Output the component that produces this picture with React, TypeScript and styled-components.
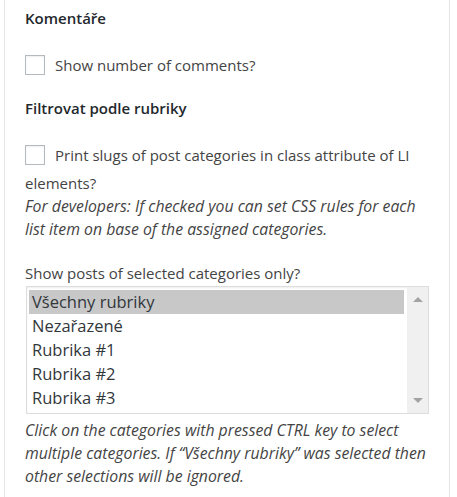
import styled, { createGlobalStyle } from 'styled-components'

const GlobalStyle = createGlobalStyle`
  html, body {
    margin: 0;
    padding: 0;
    background: #ffffff;
  }
  body {
    font-family: "Open Sans", "Liberation Sans", sans-serif;
    color: #444444;
  }
`;

const Panel = styled.div`
  margin-left: 4px;
  width: 446px;
  min-height: 497px;
  border-left: 1px solid #e5e5e5;
  border-right: 1px solid #e5e5e5;
  padding: 6px 20px 0 20px;
  box-sizing: border-box;
`;

const Heading = styled.h4`
  margin: 0;
  font-size: 15px;
  font-weight: 600;
  color: #23282d;
  line-height: 24px;
`;

const Section = styled.div<{ $top: number }>`
  margin-top: ${(p) => p.$top}px;
`;

const CheckRow = styled.label`
  display: block;
  font-size: 15px;
  line-height: 28px;
  color: #444444;
`;

const Box = styled.span`
  display: inline-block;
  width: 18px;
  height: 18px;
  border: 1px solid #b4b9be;
  box-shadow: inset 0 1px 2px rgba(0, 0, 0, 0.07);
  background: #ffffff;
  vertical-align: -4px;
  margin-right: 10px;
`;

const Note = styled.p<{ $top?: number }>`
  margin: ${(p) => p.$top ?? 0}px 0 0 0;
  font-size: 15.8px;
  font-style: italic;
  line-height: 23px;
  color: #444444;
`;

const Label = styled.div`
  font-size: 15px;
  line-height: 23px;
  color: #444444;
`;

const ListBox = styled.div`
  display: flex;
  margin: 1px 0 0 1px;
  height: 128px;
  border: 1px solid #dddddd;
  box-sizing: border-box;
  box-shadow: inset 0 1px 2px rgba(0, 0, 0, 0.07);
`;

const Options = styled.div`
  flex: 1;
  padding: 3px 3px 0 2px;
`;

const Option = styled.div<{ $selected?: boolean }>`
  height: 24px;
  line-height: 24px;
  padding-left: 3px;
  font-size: 16.5px;
  color: #32373c;
  background: ${(p) => (p.$selected ? '#c8c8c8' : 'transparent')};
`;

const Scrollbar = styled.div`
  width: 21px;
  background: #f0f0f0;
  display: flex;
  flex-direction: column;
  justify-content: space-between;
  align-items: center;
  padding: 10px 0 10px 0;
`;

const Arrow = styled.span<{ $down?: boolean }>`
  width: 0;
  height: 0;
  border-left: 5px solid transparent;
  border-right: 5px solid transparent;
  ${(p) =>
    p.$down
      ? 'border-top: 5px solid #a3a3a3;'
      : 'border-bottom: 5px solid #a3a3a3;'}
`;

const categories = ['Všechny rubriky', 'Nezařazené', 'Rubrika #1', 'Rubrika #2', 'Rubrika #3'];

function App() {
  return (
    <>
      <GlobalStyle />
      <Panel>
        <Heading>Komentáře</Heading>
        <Section $top={21}>
          <CheckRow>
            <Box />
            Show number of comments?
          </CheckRow>
        </Section>
        <Section $top={17}>
          <Heading>Filtrovat podle rubriky</Heading>
        </Section>
        <Section $top={21}>
          <CheckRow>
            <Box />
            Print slugs of post categories in class attribute of LI elements?
          </CheckRow>
          <Note $top={-2}>
            For developers: If checked you can set CSS rules for each list item on base of the assigned categories.
          </Note>
        </Section>
        <Section $top={21}>
          <Label>Show posts of selected categories only?</Label>
          <ListBox>
            <Options>
              {categories.map((c, i) => (
                <Option key={c} $selected={i === 0}>{c}</Option>
              ))}
            </Options>
            <Scrollbar>
              <Arrow />
              <Arrow $down />
            </Scrollbar>
          </ListBox>
          <Note $top={5}>
            Click on the categories with pressed CTRL key to select multiple categories. If “Všechny rubriky” was selected then other selections will be ignored.
          </Note>
        </Section>
      </Panel>
    </>
  )
}

export default App;
